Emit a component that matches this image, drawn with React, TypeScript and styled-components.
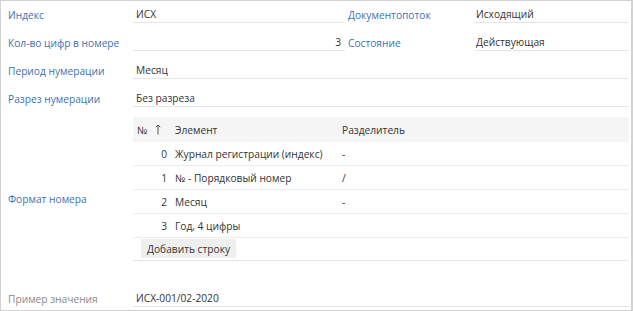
import React from "react";
import styled, { createGlobalStyle } from "styled-components";

const Global = createGlobalStyle`
  html, body { margin: 0; padding: 0; background: #fff; }
  body { font-family: "Open Sans", "Noto Sans", sans-serif; font-size: 10.2px; color: #333; }
`;

const Frame = styled.div`
  box-sizing: border-box;
  width: 633px;
  height: 311px;
  border: 1px solid #d3d3d3;
  border-right-width: 2px;
  padding: 0 2px 0 7px;
  display: flex;
  flex-direction: column;
`;

const TopGrid = styled.div`
  display: grid;
  grid-template-columns: 125px 212px 3px 127px 1fr;
  row-gap: 6px;
`;

const Label = styled.div<{ $muted?: boolean }>`
  box-sizing: border-box;
  display: flex;
  align-items: center;
  height: 22px;
  padding-top: 5px;
  color: ${(p) => (p.$muted ? "#8a8a8a" : "#3b73ae")};
  white-space: nowrap;
`;

const Field = styled.div<{ $align?: "left" | "right"; $span?: number; $pad?: number }>`
  box-sizing: border-box;
  height: 22px;
  padding-top: 5px;
  border-bottom: 1px solid #e6e6e6;
  display: flex;
  align-items: center;
  justify-content: ${(p) => (p.$align === "right" ? "flex-end" : "flex-start")};
  padding-right: ${(p) => (p.$align === "right" ? 4 : 0)}px;
  padding-left: ${(p) => p.$pad ?? 3}px;
  grid-column: span ${(p) => p.$span ?? 1};
  white-space: nowrap;
`;

const Spacer = styled.div``;

const FormatRow = styled.div`
  display: grid;
  grid-template-columns: 125px 1fr;
  margin-top: 10px;
  height: 163px;
`;

const CenterLabel = styled.div`
  display: flex;
  align-items: center;
  color: #3b73ae;
`;

const TableBox = styled.div`
  display: flex;
  flex-direction: column;
  align-self: start;
  border-bottom: 1px solid #e6e6e6;
  padding-bottom: 2px;
`;

const Row = styled.div<{ $head?: boolean }>`
  display: grid;
  grid-template-columns: 38px 167px 1fr;
  height: ${(p) => (p.$head ? 25 : 23)}px;
  align-items: center;
  background: ${(p) => (p.$head ? "#f5f5f5" : "#fff")};
  border-bottom: ${(p) => (p.$head ? "none" : "1px solid #ececec")};
`;

const Cell = styled.div<{ $right?: boolean }>`
  padding: 0 4px;
  white-space: nowrap;
  display: flex;
  align-items: center;
  justify-content: ${(p) => (p.$right ? "flex-end" : "flex-start")};
`;

const NumHead = styled(Cell)`
  gap: 8px;
`;

const AddButton = styled.button`
  align-self: flex-start;
  margin: 1px 0 0 8px;
  height: 19px;
  padding: 0 6px;
  border: none;
  background: #efefef;
  font: inherit;
  color: #333;
`;

const ExampleRow = styled.div`
  display: grid;
  grid-template-columns: 125px 1fr;
  margin-top: 5px;
`;

const SortArrow = () => (
  <svg width="6" height="11" viewBox="0 0 6 11" aria-hidden>
    <path d="M3 1 V10.5 M0.8 3.2 L3 1 L5.2 3.2" stroke="#555" strokeWidth="1" fill="none" />
  </svg>
);

const rows = [
  { n: 0, el: "Журнал регистрации (индекс)", sep: "-" },
  { n: 1, el: "№ - Порядковый номер", sep: "/" },
  { n: 2, el: "Месяц", sep: "-" },
  { n: 3, el: "Год, 4 цифры", sep: "" },
];

export default function App() {
  return (
    <>
      <Global />
      <Frame>
        <TopGrid>
          <Label>Индекс</Label>
          <Field>ИСХ</Field>
          <Spacer />
          <Label>Документопоток</Label>
          <Field $pad={1}>Исходящий</Field>

          <Label>Кол-во цифр в номере</Label>
          <Field $align="right">3</Field>
          <Spacer />
          <Label>Состояние</Label>
          <Field $pad={1}>Действующая</Field>

          <Label>Период нумерации</Label>
          <Field $span={4}>Месяц</Field>

          <Label>Разрез нумерации</Label>
          <Field $span={4}>Без разреза</Field>
        </TopGrid>

        <FormatRow>
          <CenterLabel>Формат номера</CenterLabel>
          <TableBox>
            <Row $head>
              <NumHead>
                № <SortArrow />
              </NumHead>
              <Cell>Элемент</Cell>
              <Cell>Разделитель</Cell>
            </Row>
            {rows.map((r) => (
              <Row key={r.n}>
                <Cell $right>{r.n}</Cell>
                <Cell>{r.el}</Cell>
                <Cell>{r.sep}</Cell>
              </Row>
            ))}
            <AddButton>Добавить строку</AddButton>
          </TableBox>
        </FormatRow>

        <ExampleRow>
          <Label $muted>Пример значения</Label>
          <Field>ИСХ-001/02-2020</Field>
        </ExampleRow>
      </Frame>
    </>
  );
}
